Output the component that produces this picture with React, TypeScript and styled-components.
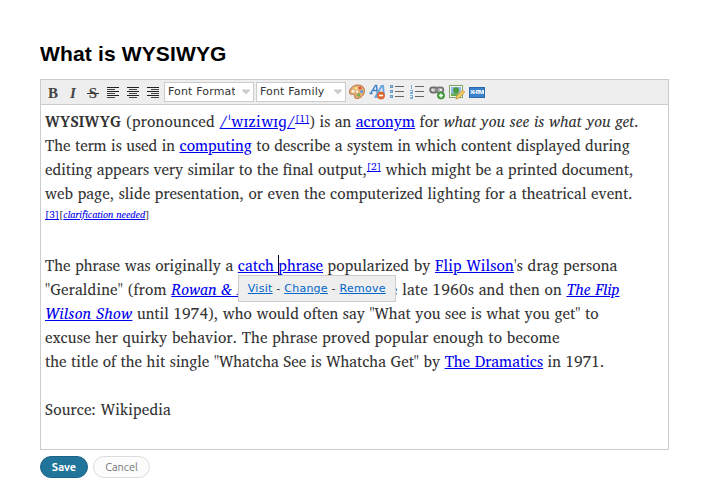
import React from 'react';
import styled, { createGlobalStyle } from 'styled-components';

const GlobalStyle = createGlobalStyle`
  * { box-sizing: border-box; }
  body { margin: 0; background: #fff; }
`;

const Page = styled.main`
  width: 720px;
  height: 484px;
  padding: 39px 51px 0 40px;
  overflow: hidden;
  color: #333;
`;

const Title = styled.h1`
  margin: 0;
  height: 40px;
  font: bold 21px/30px "Liberation Sans", Arial, sans-serif;
  letter-spacing: 0.15px;
  color: #000;
  white-space: nowrap;
`;

const Editor = styled.section`
  width: 629px;
  height: 371px;
  border: 1px solid #ccc;
`;

const Toolbar = styled.div`
  display: flex;
  align-items: center;
  height: 25px;
  padding-left: 2px;
  background: #eee;
  border-bottom: 1px solid #ccc;
`;

const ToolButton = styled.button<{ $drop?: number }>`
  display: flex;
  flex: none;
  align-items: center;
  justify-content: center;
  width: 20px;
  height: 20px;
  padding: ${p => p.$drop ?? 0}px 0 0;
  border: 0;
  background: none;
`;

const Glyph = styled.span<{ $italic?: boolean; $strike?: boolean }>`
  padding: 0 2px;
  font: ${p => (p.$italic ? 'italic' : 'normal')} bold 15px/18px "Liberation Serif", serif;
  color: #444;
  background: ${p => (p.$strike ? 'linear-gradient(#333, #333) 0 9px / 100% 1px no-repeat' : 'none')};
`;

const Select = styled.div`
  display: flex;
  flex: none;
  align-items: center;
  justify-content: space-between;
  width: 90px;
  height: 20px;
  margin-left: 1px;
  margin-right: 1px;
  padding: 0 3px;
  background: #fff;
  border: 1px solid #ccc;
`;

const SelectLabel = styled.span`
  width: 66.5px;
  overflow: hidden;
  white-space: nowrap;
  font: 11px/18px "DejaVu Sans", sans-serif;
  letter-spacing: 0.15px;
  color: #333;
`;

const Content = styled.div`
  padding: 5px 4px 0;
  font-family: "Charis SIL", "Noto Serif", "Liberation Serif", serif;
  font-size: 15.3px;
  color: #333;
`;

const Line = styled.div<{ $track?: number }>`
  height: 24px;
  line-height: 24px;
  white-space: pre;
  letter-spacing: ${p => p.$track ?? 0}px;
`;

const Part = styled.span<{ $track: number }>`
  letter-spacing: ${p => p.$track}px;
`;

const Link = styled.a`
  color: #00e;
  text-decoration: underline;
`;

const Sup = styled.sup`
  font-size: 10px;
  line-height: 0;
  vertical-align: 5px;
`;

const Anchor = styled.span`
  position: relative;
`;

const Caret = styled.span`
  position: absolute;
  left: 40px;
  top: 2px;
  width: 1px;
  height: 20px;
  background: #003;
`;

const LinkMenu = styled.span`
  position: absolute;
  left: 0;
  top: 22px;
  z-index: 1;
  width: 158px;
  height: 27px;
  padding-left: 9px;
  background: #eee;
  border: 1px solid #ccc;
  font: 11px/26px "DejaVu Sans", sans-serif;
  letter-spacing: 0.25px;
  color: #333;
`;

const MenuLink = styled.a`
  color: #06c;
  text-decoration: underline;
`;

const Actions = styled.div`
  display: flex;
  gap: 5px;
  margin-top: 6px;
`;

const ActionButton = styled.button<{ $primary?: boolean }>`
  width: ${p => (p.$primary ? 48 : 57)}px;
  height: 22px;
  padding: 0;
  border: 1px solid ${p => (p.$primary ? '#1c6389' : '#ddd')};
  border-radius: 11px;
  background: ${p => (p.$primary ? '#21759b' : '#fcfcfc')};
  color: ${p => (p.$primary ? '#fff' : '#777')};
  font: ${p => (p.$primary ? 'bold' : 'normal')} 11px/18px Ubuntu, "Noto Sans", sans-serif;
`;

const Arrow = () => (
  <svg width="8" height="6" viewBox="0 0 8 6">
    <path d="M0 .5h8v1L4 5.500l-4-4z" fill="#ccc" />
  </svg>
);

const AlignIcon = ({ kind }: { kind: 'left' | 'center' | 'right' }) => (
  <svg width="12" height="12" viewBox="0 0 12 12" shapeRendering="crispEdges">
    {[12, 8, 12, 8, 12, 8].map((w, i) => {
      const x = kind === 'left' ? 0 : kind === 'right' ? 12 - w : (12 - w) / 2;
      return <rect key={i} x={x} y={i * 2} width={w} height="1" fill={i % 2 ? '#444' : '#222'} />;
    })}
  </svg>
);

const PaletteIcon = () => (
  <svg width="16" height="16" viewBox="0 0 16 16">
    <path d="M9.500 1C5 .8.500 4 .5 8c0 2 1.300 2.800 3 2.400 1.600-.4 2.500.3 2.200 1.700-.3 1.700.6 2.600 2.500 2.400 4-.3 7.300-3.700 7.300-7.800C15.500 3 13 1.200 9.500 1z" fill="#e5ad78" stroke="#b9743c" />
    <circle cx="7" cy="4.300" r="1.500" fill="#fbe88b" />
    <circle cx="11" cy="4" r="1.500" fill="#de4c3b" />
    <circle cx="4" cy="7.300" r="1.500" fill="#edf4df" />
    <circle cx="12.700" cy="7.500" r="1.500" fill="#529bdf" />
    <circle cx="9.500" cy="11" r="1.700" fill="#6cb44d" />
    <circle cx="8.200" cy="7.600" r="1.100" fill="#fff" />
  </svg>
);

const ClearFormatIcon = () => (
  <svg width="16" height="16" viewBox="0 0 16 16" fill="none">
    <path d="M.5 9.500h3M1.500 9.500L6.500 1.500h1l.8 7.500M3.500 6.500h4" stroke="#3b80c8" strokeWidth="1.400" />
    <path d="M5.500 13h3M6.500 13L12.500 2h1.500l.8 8M8.500 9h5" stroke="#69a7df" strokeWidth="2" />
    <circle cx="12" cy="11.500" r="3.600" fill="#e66b2d" stroke="#c7501c" strokeWidth=".7" />
    <path d="M10 11.500h4" stroke="#fff" strokeWidth="1.500" />
  </svg>
);

const ListIcon = ({ numbered }: { numbered?: boolean }) => (
  <svg width="14" height="14" viewBox="0 0 14 14" shapeRendering="crispEdges">
    {[0, 5, 10].map((y, i) => (
      <g key={y}>
        {numbered ? (
          <path d={['M1.500 0v4M.5 .5h1', 'M0 5.500h2.500v1.500H.5v1.500h2.500', 'M0 10.500h2.500v3H0M0 12h2.500'][i]} fill="none" stroke="#7aaedb" />
        ) : (
          <rect x=".5" y={y + 0.5} width="2" height="2" fill="#a9cce9" stroke="#6198c9" />
        )}
        <rect x="5" y={y + 1} width="9" height="1" fill="#666" />
      </g>
    ))}
  </svg>
);

const LinkIcon = () => (
  <svg width="16" height="16" viewBox="0 0 16 16" fill="none">
    <rect x="1.200" y="3.500" width="7" height="5" rx="2.400" stroke="#6d6d6d" strokeWidth="1.900" />
    <rect x="7.300" y="3.500" width="7" height="5" rx="2.400" stroke="#777" strokeWidth="1.900" />
    <path d="M4.500 6h6.500" stroke="#999" strokeWidth="1.400" />
    <circle cx="12" cy="11.500" r="3.600" fill="#47a33b" stroke="#317e29" strokeWidth=".7" />
    <path d="M10 11.500h4M12 9.500v4" stroke="#fff" strokeWidth="1.300" />
  </svg>
);

const ImageIcon = () => (
  <svg width="16" height="16" viewBox="0 0 16 16">
    <rect x=".5" y="1.500" width="13" height="12" fill="#f4f8ee" stroke="#82a66a" />
    <rect x="2" y="3" width="10" height="9" fill="#91bce8" />
    <path d="M2 12V9.500L12 9v3z" fill="#68ac50" />
    <circle cx="7" cy="6.300" r="3" fill="#4e9a43" />
    <path d="M7 15l.8-3.300 5.700-5.700 2.200 2.200-5.700 5.700z" fill="#f3cd68" stroke="#c28c2f" strokeWidth=".8" />
  </svg>
);

const MarkupBadge = styled.span`
  flex: none;
  width: 16px;
  height: 11px;
  overflow: hidden;
  background: #3b80cd;
  border: 1px solid #2c68ad;
  color: #fff;
  font: bold 6px/9px "Liberation Sans", sans-serif;
  letter-spacing: -1.1px;
  text-align: center;
`;

export default function App() {
  return (
    <>
      <GlobalStyle />
      <Page>
        <Title>What is WYSIWYG</Title>
        <Editor>
          <Toolbar>
            <ToolButton $drop={1}><Glyph>B</Glyph></ToolButton>
            <ToolButton $drop={1}><Glyph $italic>I</Glyph></ToolButton>
            <ToolButton $drop={1}><Glyph $strike>S</Glyph></ToolButton>
            <ToolButton $drop={2}><AlignIcon kind="left" /></ToolButton>
            <ToolButton $drop={2}><AlignIcon kind="center" /></ToolButton>
            <ToolButton $drop={2}><AlignIcon kind="right" /></ToolButton>
            <Select><SelectLabel>Font Format</SelectLabel><Arrow /></Select>
            <Select><SelectLabel>Font Family</SelectLabel><Arrow /></Select>
            <ToolButton><PaletteIcon /></ToolButton>
            <ToolButton><ClearFormatIcon /></ToolButton>
            <ToolButton><ListIcon /></ToolButton>
            <ToolButton><ListIcon numbered /></ToolButton>
            <ToolButton><LinkIcon /></ToolButton>
            <ToolButton><ImageIcon /></ToolButton>
            <ToolButton $drop={1}><MarkupBadge>XHTML</MarkupBadge></ToolButton>
          </Toolbar>
          <Content>
            <Line><Part $track={0.25}><b>WYSIWYG</b> (pronounced </Part><Part $track={0.46}><Link>/ˈwɪziwɪɡ/</Link></Part><Sup><Link>[1]</Link></Sup>) is an <Part $track={0.06}><Link>acronym</Link> for </Part><Part $track={0.27}><i>what you see is what you get</i>.</Part></Line>
            <Line>The term is used in <Link>computing</Link> to describe a system in which content displayed during</Line>
            <Line>editing appears very similar to the final output,<Sup><Link>[2]</Link></Sup> which might be a printed document,</Line>
            <Line $track={0.055}>web page, slide presentation, or even the computerized lighting for a theatrical event.</Line>
            <Line><Sup><Link>[3]</Link>[<Link><i>clarification needed</i></Link>]</Sup></Line>
            <Line />
            <Line $track={0.107}><Part $track={0.05}>The phrase was originally a </Part><Anchor><Part $track={0}><Link>catch phrase</Link></Part><Caret /><LinkMenu><MenuLink>Visit</MenuLink> - <MenuLink>Change</MenuLink> - <MenuLink>Remove</MenuLink></LinkMenu></Anchor> popularized by <Part $track={0.17}><Link>Flip Wilson</Link>'s drag persona</Part></Line>
            <Line $track={0.175}>"Geraldine" (from <Link><i>Rowan &amp; Martin's Laugh-In</i></Link> in the late 1960s and then on <Link><i>The Flip</i></Link></Line>
            <Line $track={0.045}><Part $track={0.42}><Link><i>Wilson Show</i></Link></Part> until 1974), who would often say "What you see is what you get" to</Line>
            <Line $track={0.14}>excuse her quirky behavior. The phrase proved popular enough to become</Line>
            <Line $track={0.02}>the title of the hit single "Whatcha See is Whatcha Get" by <Link>The Dramatics</Link> in 1971.</Line>
            <Line />
            <Line $track={0.17}>Source: Wikipedia</Line>
          </Content>
        </Editor>
        <Actions>
          <ActionButton $primary>Save</ActionButton>
          <ActionButton>Cancel</ActionButton>
        </Actions>
      </Page>
    </>
  );
}
